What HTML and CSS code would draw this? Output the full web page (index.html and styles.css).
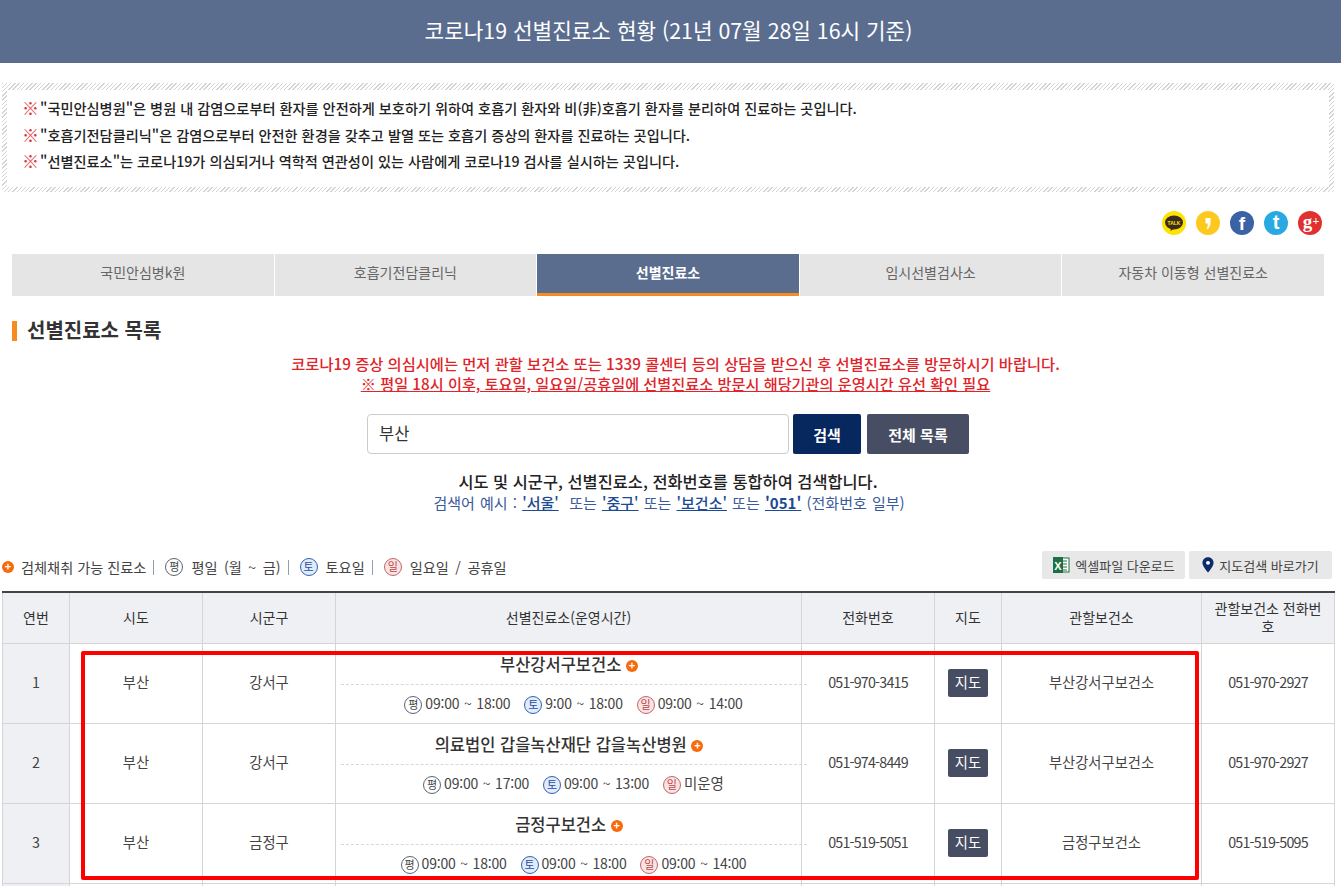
FILE: index.html
```html
<!DOCTYPE html>
<html lang="ko">
<head>
    <meta charset="UTF-8">
    <meta name="viewport" content="width=device-width, initial-scale=1.0">
    <title>코로나19 선별진료소 현황</title>
    <link rel="stylesheet" href="styles.css">
</head>
<body>
    <h1 class="page-title">코로나19 선별진료소 현황 (21년 07월 28일 16시 기준)</h1>

    <div class="notice">
        <div class="notice-inner">
            <p><span class="mark">※</span>"국민안심병원"은 병원 내 감염으로부터 환자를 안전하게 보호하기 위하여 호흡기 환자와 비(非)호흡기 환자를 분리하여 진료하는 곳입니다.</p>
            <p><span class="mark">※</span>"호흡기전담클리닉"은 감염으로부터 안전한 환경을 갖추고 발열 또는 호흡기 증상의 환자를 진료하는 곳입니다.</p>
            <p><span class="mark">※</span>"선별진료소"는 코로나19가 의심되거나 역학적 연관성이 있는 사람에게 코로나19 검사를 실시하는 곳입니다.</p>
        </div>
    </div>

    <div class="social">
        <svg class="social-icon" viewBox="0 0 24 24"><circle cx="12" cy="12" r="12" fill="#fce300"/><ellipse cx="12" cy="11.5" rx="9" ry="7" fill="#3b2a1e"/><path d="M9 16 L8.5 20 L13 17 Z" fill="#3b2a1e"/><text x="12" y="13.500" class="talk-text">TALK</text></svg>
        <svg class="social-icon" viewBox="0 0 24 24"><circle cx="12" cy="12" r="12" fill="#fdc91f"/><path d="M9.500 7 H14.500 V12 C14.500 15 13 17.500 10.500 18.500 C11.500 16.500 11.800 14.500 11.800 12.500 H9.500 Z" fill="#fff"/></svg>
        <svg class="social-icon" viewBox="0 0 24 24"><circle cx="12" cy="12" r="12" fill="#3b62a5"/><text x="12" y="19" class="glyph-f">f</text></svg>
        <svg class="social-icon" viewBox="0 0 24 24"><circle cx="12" cy="12" r="12" fill="#29a9e1"/><text x="12" y="18" class="glyph-t">t</text></svg>
        <svg class="social-icon" viewBox="0 0 24 24"><circle cx="12" cy="12" r="12" fill="#e2302e"/><text x="9.500" y="16.500" class="glyph-g">g</text><text x="18" y="13.500" class="glyph-plus">+</text></svg>
    </div>

    <div class="tabs">
        <a class="tab">국민안심병k원</a>
        <a class="tab">호흡기전담클리닉</a>
        <a class="tab active">선별진료소</a>
        <a class="tab">임시선별검사소</a>
        <a class="tab">자동차 이동형 선별진료소</a>
    </div>

    <h2 class="section-title">선별진료소 목록</h2>

    <div class="warning">
        <p>코로나19 증상 의심시에는 먼저 관할 보건소 또는 1339 콜센터 등의 상담을 받으신 후 선별진료소를 방문하시기 바랍니다.</p>
        <p class="warning-sub">※ 평일 18시 이후, 토요일, 일요일/공휴일에 선별진료소 방문시 해당기관의 운영시간 유선 확인 필요</p>
    </div>

    <div class="search">
        <input class="search-input" type="text" value="부산">
        <button class="btn btn-navy">검색</button>
        <button class="btn btn-slate">전체 목록</button>
    </div>

    <p class="hint">시도 및 시군구, 선별진료소, 전화번호를 통합하여 검색합니다.</p>
    <p class="example">검색어 예시 : <a>'서울'</a>&nbsp; 또는 <a>'중구'</a> 또는 <a>'보건소'</a> 또는 <a class="strong">'051'</a> (전화번호 일부)</p>

    <div class="toolbar">
        <div class="legend">
            <span class="plus">+</span><span class="legend-text">검체채취 가능 진료소</span><span class="sep"></span>
            <span class="day day-week">평</span><span class="legend-text">평일 (월 ~ 금)</span><span class="sep"></span>
            <span class="day day-sat">토</span><span class="legend-text">토요일</span><span class="sep"></span>
            <span class="day day-sun">일</span><span class="legend-text">일요일 / 공휴일</span>
        </div>
        <div class="tool-btns">
            <a class="tool-btn">
                <svg width="18" height="18" viewBox="0 0 18 18"><rect x="7" y="2" width="10" height="14" fill="#fff" stroke="#1d7044"/><path d="M10 5h5M10 8h5M10 11h5M10 14h5" stroke="#1d7044"/><rect x="1" y="1" width="10" height="16" fill="#1d7044"/><text x="6" y="13.500" class="xl-text">X</text></svg>
                엑셀파일 다운로드
            </a>
            <a class="tool-btn">
                <svg width="12" height="16" viewBox="0 0 14 18"><path d="M7 0C3 0 .5 3 .5 6.500 .5 11 7 18 7 18s6.500-7 6.500-11.500C13.500 3 11 0 7 0z" fill="#0b2c6b"/><circle cx="7" cy="6.500" r="2.300" fill="#fff"/></svg>
                지도검색 바로가기
            </a>
        </div>
    </div>

    <div class="table-wrap">
        <table class="list">
            <colgroup>
                <col class="c-num"><col class="c-std"><col class="c-std"><col class="c-name"><col class="c-std"><col class="c-num"><col class="c-org"><col class="c-std">
            </colgroup>
            <thead>
                <tr>
                    <th>연번</th><th>시도</th><th>시군구</th><th>선별진료소(운영시간)</th><th>전화번호</th><th>지도</th><th>관할보건소</th><th class="th-wrap">관할보건소 전화번호</th>
                </tr>
            </thead>
            <tbody>
                <tr>
                    <td class="num">1</td><td>부산</td><td>강서구</td>
                    <td class="clinic">
                        <div class="clinic-name">부산강서구보건소 <span class="plus">+</span></div>
                        <div class="clinic-hours">
                            <span class="day day-week">평</span><span class="hour">09:00 ~ 18:00</span>
                            <span class="day day-sat">토</span><span class="hour">9:00 ~ 18:00</span>
                            <span class="day day-sun">일</span><span class="hour">09:00 ~ 14:00</span>
                        </div>
                    </td>
                    <td class="phone">051-970-3415</td><td class="map-cell"><a class="map-btn">지도</a></td><td>부산강서구보건소</td><td class="phone">051-970-2927</td>
                </tr>
                <tr>
                    <td class="num">2</td><td>부산</td><td>강서구</td>
                    <td class="clinic">
                        <div class="clinic-name">의료법인 갑을녹산재단 갑을녹산병원 <span class="plus">+</span></div>
                        <div class="clinic-hours">
                            <span class="day day-week">평</span><span class="hour">09:00 ~ 17:00</span>
                            <span class="day day-sat">토</span><span class="hour">09:00 ~ 13:00</span>
                            <span class="day day-sun">일</span><span class="hour closed">미운영</span>
                        </div>
                    </td>
                    <td class="phone">051-974-8449</td><td class="map-cell"><a class="map-btn">지도</a></td><td>부산강서구보건소</td><td class="phone">051-970-2927</td>
                </tr>
                <tr>
                    <td class="num">3</td><td>부산</td><td>금정구</td>
                    <td class="clinic">
                        <div class="clinic-name">금정구보건소 <span class="plus">+</span></div>
                        <div class="clinic-hours">
                            <span class="day day-week">평</span><span class="hour">09:00 ~ 18:00</span>
                            <span class="day day-sat">토</span><span class="hour">09:00 ~ 18:00</span>
                            <span class="day day-sun">일</span><span class="hour">09:00 ~ 14:00</span>
                        </div>
                    </td>
                    <td class="phone">051-519-5051</td><td class="map-cell"><a class="map-btn">지도</a></td><td>금정구보건소</td><td class="phone">051-519-5095</td>
                </tr>
                <tr class="row-cut">
                    <td class="num"></td><td></td><td></td><td></td><td></td><td></td><td></td><td></td>
                </tr>
            </tbody>
        </table>
        <div class="highlight"></div>
    </div>
</body>
</html>
```

FILE: styles.css
```css
html, body {
    height: 886px;
    overflow: hidden;
}
body {
    margin: 0;
    font-family: "Noto Sans CJK KR", "Noto Sans", sans-serif;
    font-size: 14px;
    color: #444;
    background: #fff;
}
p, h1, h2 {
    margin: 0;
}
.page-title {
    height: 63px;
    line-height: 59px;
    padding-right: 4px;
    background: #5a6d8f;
    color: #fff;
    font-size: 21.3px;
    font-weight: 400;
    text-align: center;
}

/* 안내 박스 */
.notice {
    margin: 20px 7px 0 2px;
    padding: 7px 5px 5px 5px;
    background: repeating-linear-gradient(135deg, #d4d4d4 0, #d4d4d4 1px, #fff 1px, #fff 3px);
}
.notice-inner {
    height: 97px;
    padding: 5px 0 0 15px;
    box-sizing: border-box;
    background: #fff;
}
.notice-inner p {
    height: 26.5px;
    line-height: 26px;
    font-size: 14.2px;
    font-weight: 500;
    color: #222;
}
.mark {
    display: inline-block;
    width: 18px;
    color: #e0343a;
    font-size: 17px;
    vertical-align: -1px;
}

.social {
    display: flex;
    justify-content: flex-end;
    gap: 10px;
    margin-top: 19px;
    padding-right: 19px;
}
.social-icon {
    width: 24px;
    height: 24px;
}
.talk-text {
    font: 700 5px "Liberation Sans", sans-serif;
    fill: #fce300;
    text-anchor: middle;
}
.glyph-f, .glyph-t, .glyph-g, .glyph-plus {
    font-family: "Liberation Serif", serif;
    font-weight: 700;
    fill: #fff;
    text-anchor: middle;
}
.glyph-f { font-family: "Liberation Sans", sans-serif; font-size: 19px; }
.glyph-t { font-family: "Liberation Sans", sans-serif; font-size: 20px; }
.glyph-g { font-size: 19px; }
.glyph-plus { font-size: 12px; }

/* 탭 */
.tabs {
    display: flex;
    gap: 1px;
    margin: 19px 17px 0 12px;
}
.tab {
    flex: 1;
    height: 42px;
    line-height: 37px;
    box-sizing: border-box;
    background: #e5e5e5;
    color: #666;
    text-align: center;
}
.tab.active {
    background: #5a6d8f;
    border-bottom: 3px solid #f68b1f;
    color: #fff;
    font-weight: 700;
}

.section-title {
    margin: 25px 0 0 12px;
    padding-left: 10px;
    height: 20px;
    line-height: 18px;
    border-left: 5px solid #f68b1f;
    font-size: 20px;
    font-weight: 700;
    color: #333;
}

.warning {
    margin-top: 12px;
    padding-left: 10px;
    text-align: center;
    color: #e0242a;
    font-size: 15.3px;
    font-weight: 500;
}
.warning p {
    line-height: 20px;
}
.warning-sub {
    font-size: 15.2px;
    text-decoration: underline;
}

/* 검색 */
.search {
    display: flex;
    justify-content: center;
    margin: 21px 5px 0 0;
}
.search-input {
    width: 422px;
    height: 40px;
    box-sizing: border-box;
    padding: 0 11px 3px;
    border: 1px solid #ccc;
    border-radius: 4px;
    font: 400 16.5px "Noto Sans CJK KR", sans-serif;
    color: #333;
}
.btn {
    height: 40px;
    border: 0;
    border-radius: 2px;
    color: #fff;
    font: 700 15px "Noto Sans CJK KR", sans-serif;
}
.btn-navy {
    width: 68px;
    margin-left: 4px;
    background: #07275f;
}
.btn-slate {
    width: 102px;
    margin-left: 6px;
    background: #474d62;
}
.hint {
    margin: 16px 5px 0 0;
    line-height: 22px;
    text-align: center;
    font-size: 16.4px;
    font-weight: 500;
    color: #222;
}
.example {
    margin-right: 3px;
    line-height: 22px;
    text-align: center;
    font-size: 15px;
    word-spacing: 1px;
    color: #3a5a9a;
}
.example a {
    color: #1d4a94;
    font-weight: 500;
    text-decoration: underline;
}
.example a.strong {
    font-weight: 700;
}

/* 범례 + 버튼 */
.toolbar {
    display: flex;
    justify-content: space-between;
    align-items: center;
    height: 28px;
    margin: 37px 9px 0 2px;
}
.legend {
    display: flex;
    align-items: center;
    padding-top: 4px;
}
.legend-text {
    margin-left: 8px;
    font-size: 14.2px;
    word-spacing: 2.5px;
    color: #444;
}
.plus + .legend-text {
    margin-left: 7px;
    word-spacing: 0;
}
.sep {
    width: 1px;
    height: 15px;
    margin: 0 11px 0 7px;
    background: #8fa0b5;
}
.plus {
    display: inline-block;
    width: 12px;
    height: 12px;
    line-height: 11px;
    border-radius: 50%;
    background: #f76a0c;
    color: #fff;
    font-size: 11px;
    font-weight: 700;
    text-align: center;
    vertical-align: 0;
}
.day {
    display: inline-block;
    width: 18px;
    height: 18px;
    line-height: 15px;
    box-sizing: border-box;
    border-radius: 50%;
    border: 1px solid;
    font-size: 11px;
    text-align: center;
    vertical-align: middle;
}
.day-week {
    border-color: #5a6478;
    color: #444;
    background: #fff;
}
.day-sat {
    border-color: #2f62b5;
    color: #1f4f9f;
    background: #e1ebfa;
}
.day-sun {
    border-color: #c2666a;
    color: #b9474c;
    background: #fae3e3;
}
.tool-btns {
    display: flex;
    gap: 4px;
}
.tool-btn {
    display: flex;
    align-items: center;
    justify-content: center;
    gap: 5px;
    width: 143px;
    height: 28px;
    border-radius: 2px;
    background: #e8e8e8;
    font-size: 13px;
    color: #444;
}
.xl-text {
    font: 700 11px "Liberation Sans", sans-serif;
    fill: #fff;
    text-anchor: middle;
}

/* 목록 테이블 */
.table-wrap {
    position: relative;
    margin: 12px 7px 0 2px;
}
.list {
    width: 1332px;
    table-layout: fixed;
    border-collapse: collapse;
    border-top: 2px solid #444;
}
.c-num { width: 67px; }
.c-std { width: 133px; }
.c-name { width: 466px; }
.c-org { width: 200px; }
.list th, .list td {
    border: 1px solid #d5d5d5;
    text-align: center;
    padding: 0;
}
.list th {
    height: 48px;
    padding: 0 4px 2px;
    background: #eef0f4;
    font-weight: 400;
    line-height: 18px;
    color: #333;
}
.list th.th-wrap {
    padding: 0 8px 2px;
}
.list td {
    height: 75px;
    padding-bottom: 4px;
    font-size: 14.3px;
    color: #444;
}
.list td.clinic {
    height: 79px;
    padding-bottom: 0;
}
.list td.map-cell {
    height: 77px;
    padding-bottom: 2px;
}
.list td.num {
    background: #eef0f4;
}
.list td.phone {
    letter-spacing: -.8px;
}
.list .row-cut td {
    height: 2px;
    padding: 0;
}
.clinic-name {
    position: relative;
    left: 5px;
    width: 456px;
    height: 31px;
    padding-right: 10px;
    line-height: 22px;
    border-bottom: 1px dashed #d8d8d8;
    font-size: 16.5px;
    font-weight: 500;
    color: #333;
}
.clinic-name .plus {
    vertical-align: 1px;
}
.clinic-hours {
    margin-top: 7px;
    padding-left: 20px;
    line-height: 22px;
    font-size: 14px;
    color: #444;
}
.hour {
    margin: 0 10px 0 3px;
    letter-spacing: -.2px;
    word-spacing: 1px;
}
.hour.closed {
    font-size: 14.5px;
    letter-spacing: 0;
}
.map-btn {
    display: block;
    width: 40px;
    height: 28px;
    line-height: 26px;
    margin: 0 auto;
    border-radius: 2px;
    background: #474d62;
    color: #fff;
}
.highlight {
    position: absolute;
    left: 79px;
    top: 60px;
    width: 1118px;
    height: 229px;
    box-sizing: border-box;
    border: 4px solid #f00;
    border-radius: 2px;
}
```
